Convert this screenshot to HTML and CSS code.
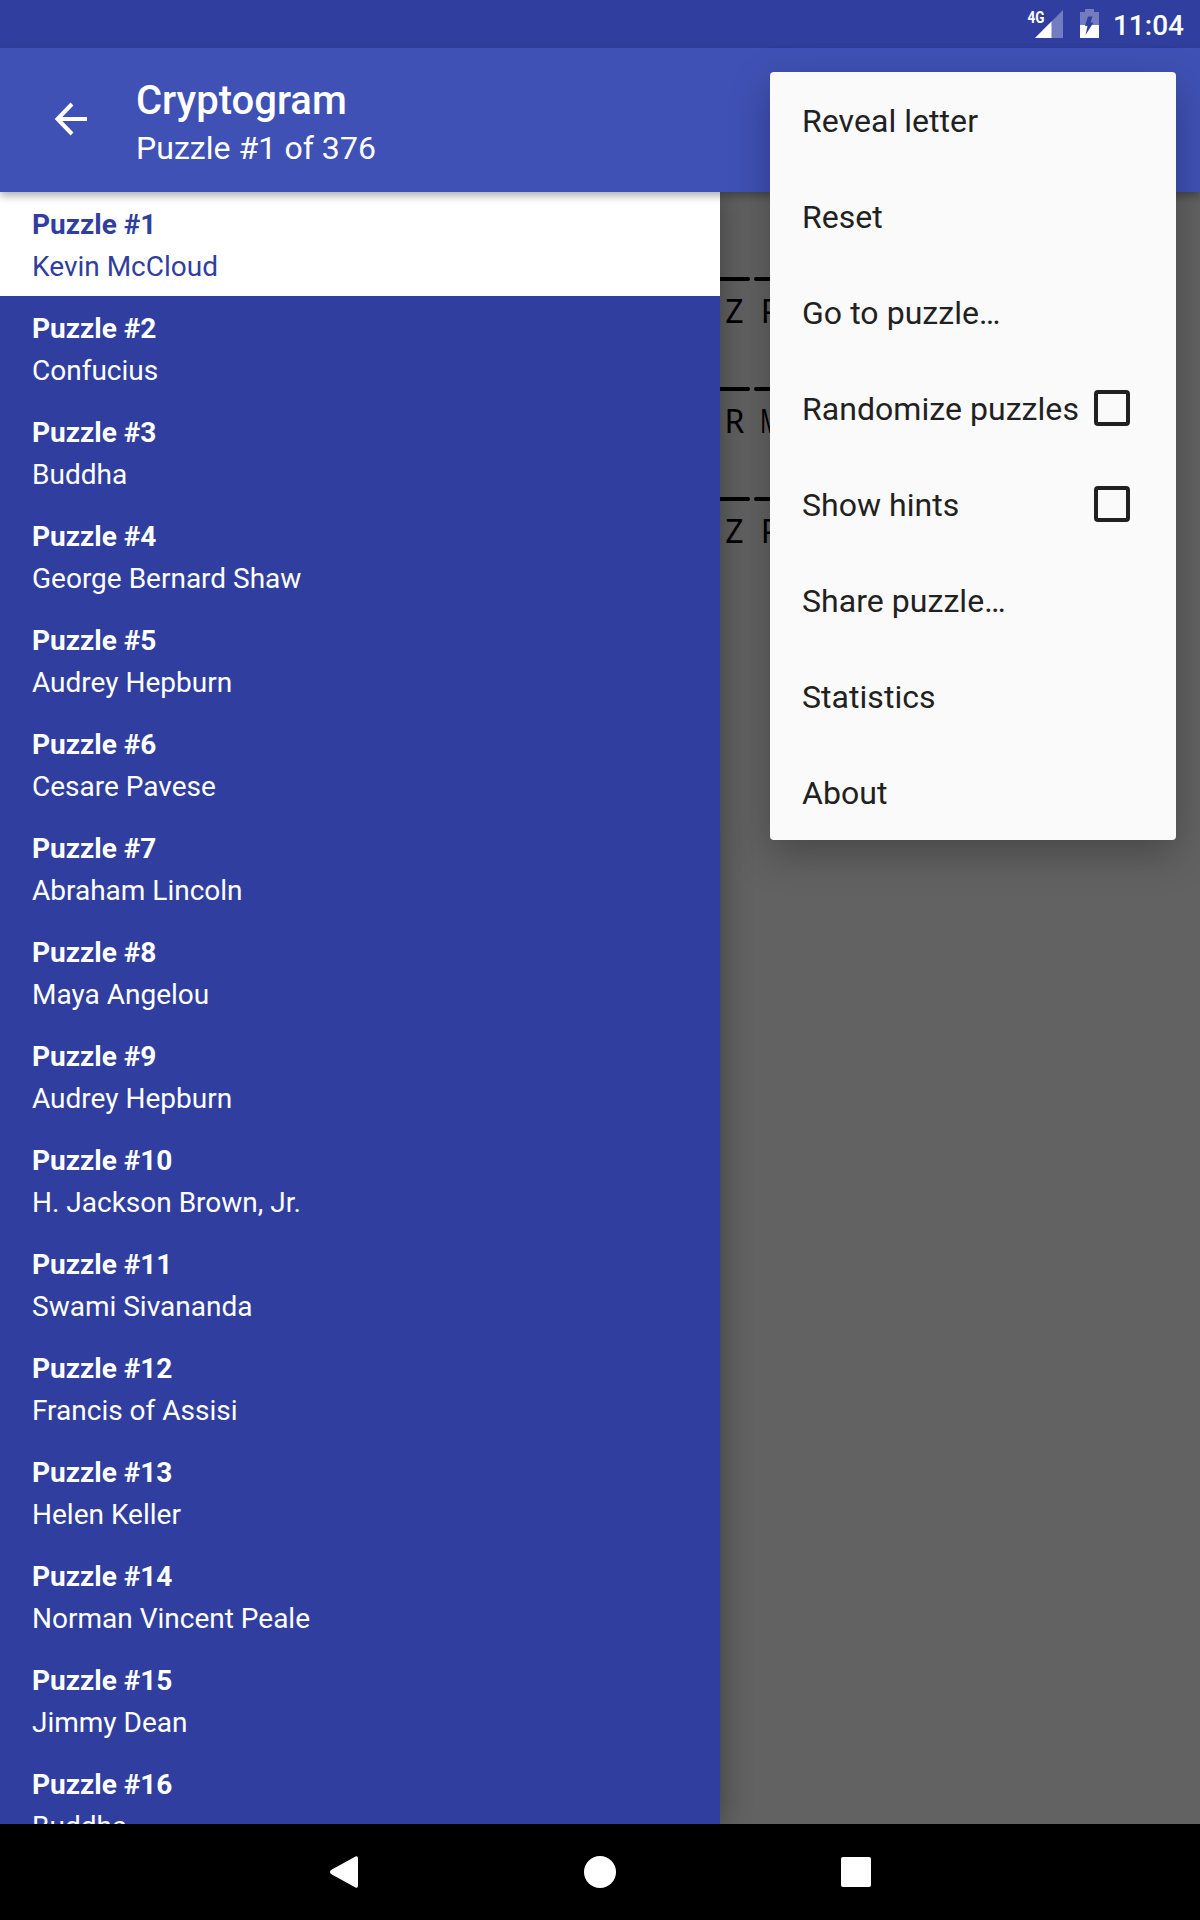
FILE: index.html
```html
<!DOCTYPE html>
<html lang="en">
<head>
<meta charset="utf-8">
<title>Cryptogram</title>
<link rel="stylesheet" href="styles.css">
</head>
<body>
<div class="screen">
  <div class="status-bar">
    <svg class="signal" width="38" height="30" viewBox="0 0 38 30">
      <path d="M36 1V29H8Z" fill="#fff" fill-opacity=".32"/>
      <path d="M24.500 12.500V29H8Z" fill="#fff"/>
      <text class="network" x="0.500" y="13.700" textLength="17" lengthAdjust="spacingAndGlyphs">4G</text>
    </svg>
    <svg class="battery" width="19" height="29" viewBox="0 0 19 29">
      <path d="M5 0H14V3H19V29H0V3H5Z" fill="#fff" fill-opacity=".32"/>
      <path d="M0 16H19V29H0Z" fill="#fff"/>
      <path d="M8 7.500H12.500L10.500 13.500H13.500L5.500 26L7.500 17H5Z" fill="#303f9f"/>
    </svg>
    <span class="clock">11:04</span>
  </div>
  <header class="app-bar">
    <svg class="back" width="36" height="36" viewBox="0 0 36 36">
      <path d="M34 18H5M19 3L4.500 18L19 33" fill="none" stroke="#fff" stroke-width="4"/>
    </svg>
    <div class="titles">
      <h1>Cryptogram</h1>
      <p>Puzzle #1 of 376</p>
    </div>
  </header>
  <main class="content">
    <ul class="drawer">
      <li class="selected"><b>Puzzle #1</b><span>Kevin McCloud</span></li>
      <li><b>Puzzle #2</b><span>Confucius</span></li>
      <li><b>Puzzle #3</b><span>Buddha</span></li>
      <li><b>Puzzle #4</b><span>George Bernard Shaw</span></li>
      <li><b>Puzzle #5</b><span>Audrey Hepburn</span></li>
      <li><b>Puzzle #6</b><span>Cesare Pavese</span></li>
      <li><b>Puzzle #7</b><span>Abraham Lincoln</span></li>
      <li><b>Puzzle #8</b><span>Maya Angelou</span></li>
      <li><b>Puzzle #9</b><span>Audrey Hepburn</span></li>
      <li><b>Puzzle #10</b><span>H. Jackson Brown, Jr.</span></li>
      <li><b>Puzzle #11</b><span>Swami Sivananda</span></li>
      <li><b>Puzzle #12</b><span>Francis of Assisi</span></li>
      <li><b>Puzzle #13</b><span>Helen Keller</span></li>
      <li><b>Puzzle #14</b><span>Norman Vincent Peale</span></li>
      <li><b>Puzzle #15</b><span>Jimmy Dean</span></li>
      <li><b>Puzzle #16</b><span>Buddha</span></li>
    </ul>
    <section class="puzzle">
      <div class="line"><span class="cell"><b>Z</b></span><span class="cell"><b>P</b></span></div>
      <div class="line"><span class="cell"><b>R</b></span><span class="cell"><b class="wide">M</b></span></div>
      <div class="line"><span class="cell"><b>Z</b></span><span class="cell"><b>P</b></span></div>
    </section>
  </main>
  <nav class="nav-bar">
    <svg width="32" height="32" viewBox="0 0 32 32"><path d="M27.500 .5Q30 -.5 30 2.500V29.500Q30 32.500 27.500 31.500L3 18Q1 16 3 14Z" fill="#fff"/></svg>
    <svg width="32" height="32" viewBox="0 0 32 32"><circle cx="16" cy="16" r="16" fill="#fff"/></svg>
    <svg width="32" height="32" viewBox="0 0 32 32"><rect x="1" y="1" width="30" height="30" rx="2" fill="#fff"/></svg>
  </nav>
  <ul class="menu">
    <li>Reveal letter</li>
    <li>Reset</li>
    <li>Go to puzzle…</li>
    <li>Randomize puzzles<i class="checkbox"></i></li>
    <li>Show hints<i class="checkbox"></i></li>
    <li>Share puzzle…</li>
    <li>Statistics</li>
    <li>About</li>
  </ul>
</div>
</body>
</html>
```
FILE: styles.css
```css
* { box-sizing: border-box; margin: 0; padding: 0; }

body { font-family: Roboto, sans-serif; }

ul { list-style: none; }

svg { display: block; flex: none; overflow: visible; }

.screen {
  position: relative;
  display: flex;
  flex-direction: column;
  width: 1200px;
  height: 1920px;
  overflow: hidden;
}

.status-bar {
  display: flex;
  justify-content: flex-end;
  height: 48px;
  padding: 9px 16px 0 0;
  background: #303f9f;
  color: #fff;
}

.network {
  font: 700 16px Roboto, sans-serif;
  fill: #fff;
}

.battery { margin-left: 15px; }

.clock {
  margin-left: 14px;
  padding-top: 1px;
  font-size: 28px;
  font-weight: 500;
  line-height: 32px;
}

.app-bar {
  position: relative;
  z-index: 1;
  display: flex;
  align-items: flex-start;
  height: 144px;
  padding-left: 53px;
  background: #3f51b5;
  color: #fff;
  box-shadow: 0 4px 8px rgba(0, 0, 0, .3);
}

.back { margin-top: 53px; }

.titles { padding: 29px 0 0 47px; }

.titles h1 {
  font-size: 40px;
  font-weight: 500;
  line-height: 48px;
}

.titles p {
  font-size: 32px;
  line-height: 46px;
  letter-spacing: .05px;
}

.content {
  display: flex;
  height: 1632px;
  overflow: hidden;
  background: #626262;
}

.drawer {
  position: relative;
  flex: none;
  width: 720px;
  background: #303f9f;
  color: #fff;
  box-shadow: 0 0 28px rgba(0, 0, 0, .4);
}

.drawer li {
  display: flex;
  flex-direction: column;
  height: 104px;
  padding: 12px 32px 8px;
  font-size: 28px;
  line-height: 42px;
}

.drawer .selected { background: #fff; color: #303f9f; }

.puzzle {
  flex: 1;
  padding-top: 85px;
  overflow: hidden;
  font-family: "Noto Sans", sans-serif;
  font-size: 32px;
  color: #000;
}

.line {
  display: flex;
  gap: 4px;
  height: 110px;
  margin-left: -2px;
}

.cell {
  display: flex;
  flex-direction: column;
  align-items: center;
  gap: 10px;
  width: 32px;
}

.cell::before {
  content: "";
  width: 32px;
  height: 4px;
  border-radius: 2px;
  background: #000;
}

.cell b {
  padding-left: 1px;
  font-weight: 400;
  line-height: 40px;
}

.cell .wide { transform: scaleX(.72); }

.nav-bar {
  position: relative;
  display: flex;
  justify-content: center;
  align-items: center;
  gap: 224px;
  height: 96px;
  background: #000;
}

.menu {
  position: absolute;
  z-index: 2;
  top: 72px;
  right: 24px;
  width: 406px;
  border-radius: 4px;
  background: #fafafa;
  color: #212121;
  box-shadow: 0 14px 40px rgba(0, 0, 0, .28);
}

.menu li {
  display: flex;
  align-items: center;
  justify-content: space-between;
  height: 96px;
  padding: 2px 46px 0 32px;
  font-size: 32px;
  letter-spacing: .05px;
  white-space: nowrap;
}

.checkbox {
  width: 36px;
  height: 36px;
  margin-top: -2px;
  border: 4px solid #212121;
  border-radius: 4px;
}
```
